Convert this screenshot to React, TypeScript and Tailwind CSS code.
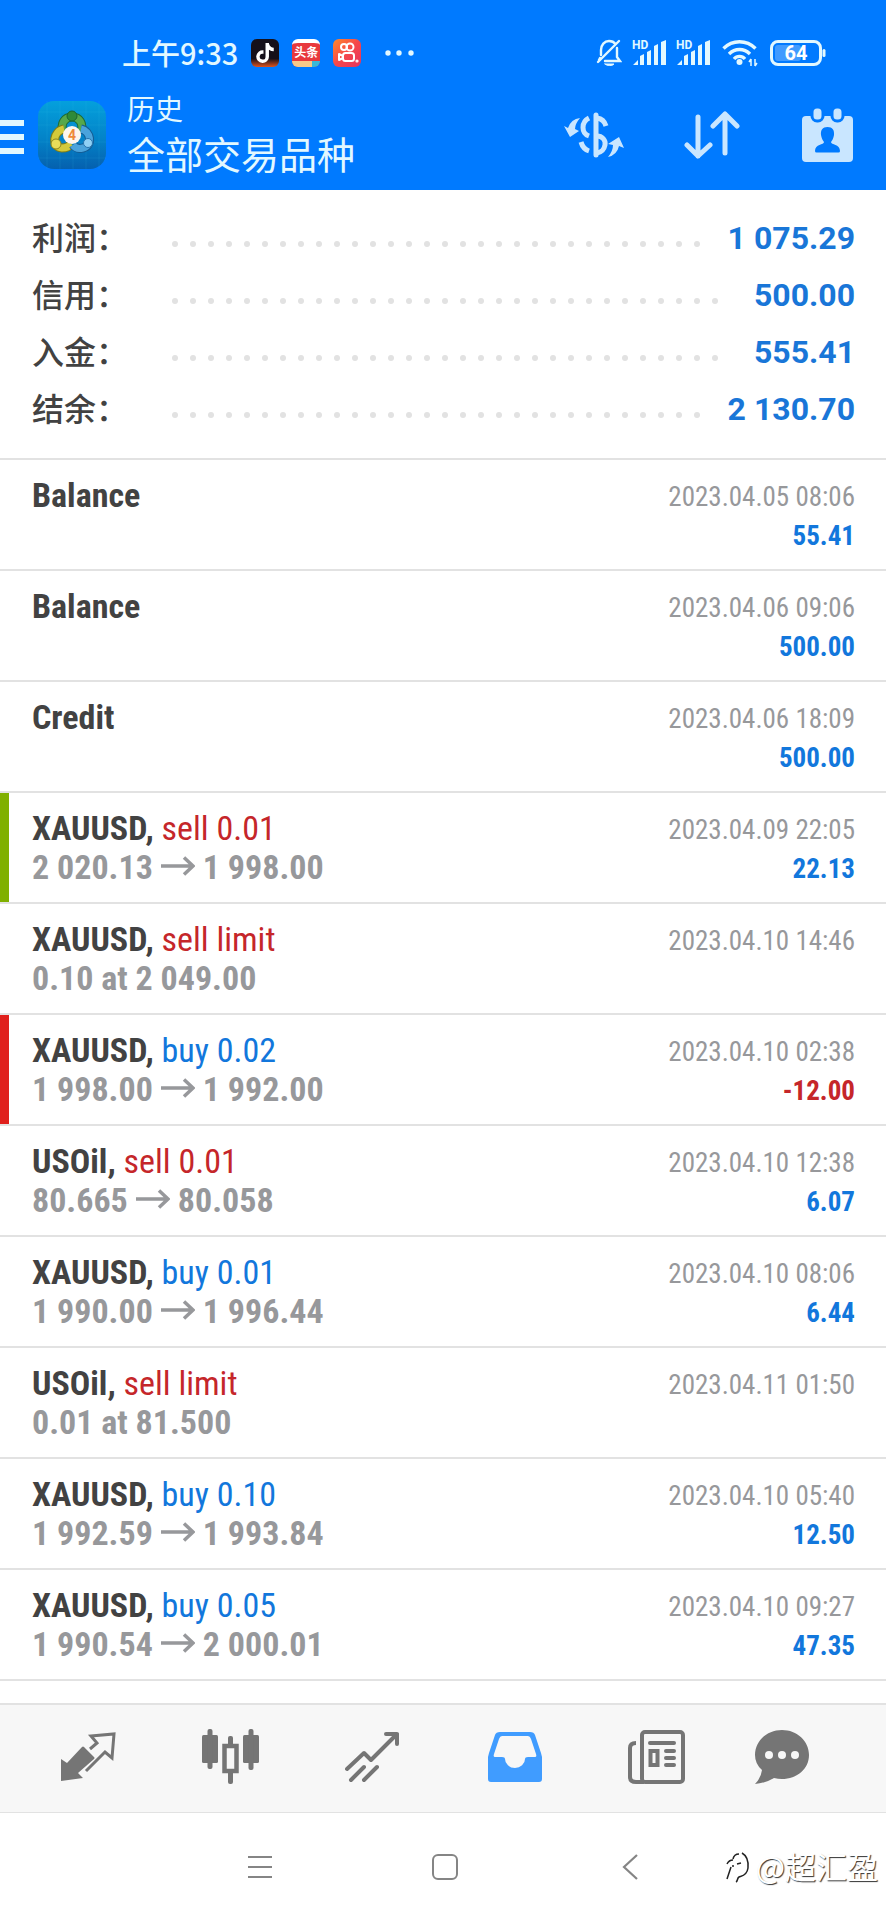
import type { ReactNode } from "react";
import { FaTiktok } from "react-icons/fa6";

type Deal = {
  symbol: string;
  action?: string;
  side?: "buy" | "sell";
  from?: string;
  to?: string;
  note?: string;
  time?: string;
  value?: string;
  mark?: "tp" | "sl";
};

const summary = [
  { label: "利润：", value: "1 075.29" },
  { label: "信用：", value: "500.00" },
  { label: "入金：", value: "555.41" },
  { label: "结余：", value: "2 130.70" },
];

const deals: Deal[] = [
  { symbol: "Balance", time: "2023.04.05 08:06", value: "55.41" },
  { symbol: "Balance", time: "2023.04.06 09:06", value: "500.00" },
  { symbol: "Credit", time: "2023.04.06 18:09", value: "500.00" },
  { symbol: "XAUUSD", action: "sell 0.01", side: "sell", from: "2 020.13", to: "1 998.00", time: "2023.04.09 22:05", value: "22.13", mark: "tp" },
  { symbol: "XAUUSD", action: "sell limit", side: "sell", note: "0.10 at 2 049.00", time: "2023.04.10 14:46" },
  { symbol: "XAUUSD", action: "buy 0.02", side: "buy", from: "1 998.00", to: "1 992.00", time: "2023.04.10 02:38", value: "-12.00", mark: "sl" },
  { symbol: "USOil", action: "sell 0.01", side: "sell", from: "80.665", to: "80.058", time: "2023.04.10 12:38", value: "6.07" },
  { symbol: "XAUUSD", action: "buy 0.01", side: "buy", from: "1 990.00", to: "1 996.44", time: "2023.04.10 08:06", value: "6.44" },
  { symbol: "USOil", action: "sell limit", side: "sell", note: "0.01 at 81.500", time: "2023.04.11 01:50" },
  { symbol: "XAUUSD", action: "buy 0.10", side: "buy", from: "1 992.59", to: "1 993.84", time: "2023.04.10 05:40", value: "12.50" },
  { symbol: "XAUUSD", action: "buy 0.05", side: "buy", from: "1 990.54", to: "2 000.01", time: "2023.04.10 09:27", value: "47.35" },
  { symbol: "XAUUSD", action: "buy 0.10", side: "buy" },
];

function Signal() {
  return (
    <svg width="34" height="28" viewBox="0 0 34 28" fill="currentColor">
      <text x="0" y="10" fontSize="12" fontWeight="700" fontFamily="Roboto, sans-serif">
        HD
      </text>
      <path d="M1 26l5-5v5zM8 17l4-2v11H8zM15 13l4-2v15h-4zM22 7l4-2v21h-4zM29 3l5-2v25h-5z" />
    </svg>
  );
}

function StatusBar() {
  return (
    <div className="flex h-20 items-center justify-between pt-[26px] pr-[60px] pl-[122px]">
      <div className="flex items-center gap-[13px]">
        <span className="pb-0.5 text-[29px] leading-8 font-medium">上午9:33</span>
        <span className="flex size-7 items-center justify-center overflow-hidden rounded-md bg-[linear-gradient(#15101a_70%,#e2531d)] text-white">
          <FaTiktok size={20} />
        </span>
        <span className="flex size-7 flex-col items-center overflow-hidden rounded-md border-t-4 border-white bg-[#e8383d] text-white">
          <span className="text-[12px] leading-[18px] font-bold">头条</span>
          <span className="h-1.5 w-full bg-[linear-gradient(90deg,#f7c98a_70%,#39b9d8_70%)]" />
        </span>
        <svg className="rounded-md" width="28" height="28" viewBox="0 0 28 28" fill="none" stroke="#fff" strokeWidth="2">
          <defs>
            <linearGradient id="ks" x1="0" y1="0" x2="1" y2="1">
              <stop offset="0" stopColor="#ff8a2b" />
              <stop offset="0.5" stopColor="#f5474b" />
              <stop offset="1" stopColor="#e6335f" />
            </linearGradient>
          </defs>
          <rect width="28" height="28" fill="url(#ks)" stroke="none" />
          <circle cx="11" cy="8" r="3" />
          <circle cx="17" cy="8" r="3.5" />
          <rect x="10" y="14" width="11" height="8" rx="2.5" />
          <path d="M10 17l-4-2v6l4-2" strokeLinejoin="round" />
          <circle cx="24" cy="22" r="0.6" />
        </svg>
        <svg className="ml-2.5" width="32" height="8" viewBox="0 0 32 8" fill="currentColor">
          <circle cx="4" cy="4" r="2.7" />
          <circle cx="15" cy="4" r="2.7" />
          <circle cx="27" cy="4" r="2.7" />
        </svg>
      </div>
      <div className="flex items-center">
        <svg className="mr-2.5" width="26" height="28" viewBox="0 0 26 28" fill="none" stroke="currentColor" strokeWidth="2.4" strokeLinecap="round">
          <path d="M5 16V11c0-5 3.500-9 8-9 3 0 5 1 6.500 3M21 9v9l3 4H9M4 19l-1 2" />
          <path d="M23 2L2 23" />
          <path d="M9 25h9c-1 2-7.500 2-9 0z" fill="currentColor" strokeWidth="1" />
        </svg>
        <Signal />
        <span className="w-2.5" />
        <Signal />
        <svg className="mx-3" width="36" height="28" viewBox="0 0 36 28" fill="none" stroke="currentColor" strokeWidth="3.400">
          <path d="M1.500 9.500c9-9 23-9 32 0M7 15c6-6 15-6 21 0M12 20c3-3.500 8-3.500 11 0" />
          <circle cx="17.500" cy="23" r="3" fill="currentColor" stroke="none" />
          <path d="M29 20v7M29 20l-2 3M33 20v7M33 27l2-3" strokeWidth="1.500" />
        </svg>
        <svg width="56" height="26" viewBox="0 0 56 26" fill="none">
          <rect x="5" y="5" width="26" height="16" rx="3" fill="#fff" fillOpacity="0.25" />
          <rect x="1.500" y="1.500" width="49" height="23" rx="6.500" stroke="currentColor" strokeWidth="3" />
          <rect x="52.500" y="9" width="3" height="8" rx="1.500" fill="currentColor" />
          <text x="26" y="20" textAnchor="middle" fill="#fff" fontSize="20" fontWeight="700" fontFamily="Roboto, sans-serif">
            64
          </text>
        </svg>
      </div>
    </div>
  );
}

function Logo() {
  return (
    <svg width="68" height="68" viewBox="0 0 68 68">
      <defs>
        <linearGradient id="tile" x1="0" y1="0" x2="0" y2="1">
          <stop offset="0" stopColor="#04a0dc" />
          <stop offset="0.550" stopColor="#0383c8" />
          <stop offset="1" stopColor="#0560ae" />
        </linearGradient>
      </defs>
      <rect width="68" height="68" rx="16" fill="url(#tile)" />
      <path d="M9 0v68M22 0v68M35 0v68M48 0v68M61 0v68M0 11h68M0 24h68M0 41h68M0 57h68" stroke="#4cc2ee" strokeOpacity="0.120" />
      <g strokeWidth="7" fill="none">
        <path d="M25 32c-3-10 2-16 9-16s12 6 9 16" stroke="#1d6b34" strokeWidth="9" />
        <path d="M25 32c-3-10 2-16 9-16s12 6 9 16" stroke="#56a84c" />
        <path d="M26 28c-11 2-13 18-2 19 4 0 7-1 9-4" stroke="#7d7d17" strokeWidth="9" />
        <path d="M26 28c-11 2-13 18-2 19 4 0 7-1 9-4" stroke="#d3c93a" />
        <path d="M43 28c10 2 12 17 2 19-4 1-8 0-10-3" stroke="#155b92" strokeWidth="9" />
        <path d="M43 28c10 2 12 17 2 19-4 1-8 0-10-3" stroke="#4aa3dc" />
      </g>
      <circle cx="34" cy="15" r="5" fill="#2f8a38" stroke="#1a6430" />
      <circle cx="18" cy="43" r="5" fill="#e8dc5a" stroke="#8a841c" />
      <circle cx="50" cy="42" r="4.500" fill="#8fd0f5" stroke="#2673ad" />
      <circle cx="34" cy="34" r="9" fill="#fdf6ee" />
      <text x="34" y="39" textAnchor="middle" fontSize="14" fontWeight="700" fill="#ee8a3a" fontFamily="Roboto, sans-serif">
        4
      </text>
    </svg>
  );
}

function Header() {
  return (
    <header className="bg-[#007aff] text-[#e2f8ff]">
      <StatusBar />
      <div className="flex h-[110px] items-center pr-8">
        <button aria-label="菜单" className="flex w-6 flex-col gap-2 pt-1">
          <span className="h-1.5 bg-current" />
          <span className="h-1.5 bg-current" />
          <span className="h-1.5 bg-current" />
        </button>
        <span className="ml-3.5">
          <Logo />
        </span>
        <div className="ml-[21px] flex-1 pb-1">
          <p className="text-[28px] leading-10">历史</p>
          <h1 className="text-[38px] leading-[50px]">全部交易品种</h1>
        </div>
        <div className="flex items-center gap-[60px] text-[#c9e6ff]">
          <button aria-label="币种">
            <svg width="60" height="52" viewBox="0 0 60 52" fill="none" stroke="currentColor" strokeWidth="5">
              <path d="M32 6v40" strokeLinecap="round" />
              <path d="M33 9q7 1 9 8M33 27c5 0 9 4 8 9s-3 7-8 8M25 9c-8 4-8 15 0 18M17 33q2 7 8 9" />
              <path d="M0 17l4 2Q7 10 16 9q-5 6-5 11l4 2-9 6zM60 39l-5-2q-2 9-11 11 5-6 5-12l-5-1 11-7z" fill="currentColor" stroke="none" />
            </svg>
          </button>
          <button aria-label="排序">
            <svg width="57" height="50" viewBox="0 0 57 50" fill="none" stroke="currentColor" strokeWidth="5" strokeLinecap="round" strokeLinejoin="round">
              <path d="M14 7v39M3 35l11 11 12-11M41 43V4M29 16L41 4l12 12" />
            </svg>
          </button>
          <button aria-label="日期">
            <svg width="53" height="54" viewBox="0 0 53 54" fill="currentColor">
              <rect x="1" y="8" width="51" height="46" rx="4" />
              <g className="stroke-[#007aff]" strokeWidth="3">
                <rect x="11" y="-1" width="11" height="14" rx="5" />
                <rect x="31" y="-1" width="11" height="14" rx="5" />
              </g>
              <path
                className="fill-[#007aff]"
                d="M26.500 19c5 0 7 3 6.500 8-.5 3-1.500 5-3 7 0 3 9 2 9 9q0 1.500-1.500 1.500h-22Q14 44.500 14 43c0-7 9-6 9-9-1.500-2-2.500-4-3-7-.5-5 1.500-8 6.500-8z"
              />
            </svg>
          </button>
        </div>
      </div>
    </header>
  );
}

function Summary() {
  return (
    <dl className="border-b-2 border-[#e2e2e2] pt-[19px] pr-[31px] pb-[21px] pl-8">
      {summary.map((row) => (
        <div key={row.label} className="flex h-[57px] items-center">
          <dt className="w-24 pb-1 text-[32px] font-medium whitespace-nowrap text-[#424242]">{row.label}</dt>
          {/* dots that don't fit wrap onto a clipped second line */}
          <div aria-hidden="true" className="mt-3 mr-5 ml-[38px] flex h-1.5 min-w-0 flex-1 flex-wrap overflow-hidden">
            {Array.from({ length: 40 }, (_, i) => (
              <span key={i} className="flex w-[18px] justify-center">
                <span className="size-1.5 rounded-full bg-[#e2e2e2]" />
              </span>
            ))}
          </div>
          <dd className="font-['Roboto',sans-serif] text-[32px] font-bold text-[#1976d8]">{row.value}</dd>
        </div>
      ))}
    </dl>
  );
}

function DealRow({ deal }: { deal: Deal }) {
  const negative = deal.value?.startsWith("-");
  return (
    <li className="relative flex h-[111px] justify-between border-b-2 border-[#e2e2e2] pt-4 pr-[31px] pl-8 font-['Roboto_Condensed','Roboto',sans-serif] leading-[39px]">
      {deal.mark && (
        <span className={`absolute inset-y-0 left-0 w-[9px] ${deal.mark === "tp" ? "bg-[#80b000]" : "bg-[#e0201c]"}`} />
      )}
      <div className="text-[34px]">
        <p>
          <span className="font-bold text-[#424242]">
            {deal.symbol}
            {deal.action && ","}
          </span>
          {deal.action && (
            <span className={deal.side === "buy" ? "text-[#1277dc]" : "text-[#c5262a]"}> {deal.action}</span>
          )}
        </p>
        <p className="flex items-center font-bold text-[#97989b]">
          {deal.note}
          {deal.from && (
            <>
              {deal.from}
              <svg className="mx-2 mb-1" width="34" height="20" viewBox="0 0 34 20" fill="none" stroke="currentColor" strokeWidth="3.500">
                <path d="M0 10h32M23 1.500l9 8.500-9 8.500" />
              </svg>
              {deal.to}
            </>
          )}
        </p>
      </div>
      <div className="pt-0.5 text-right text-[27px]">
        <p className="text-[#97989b]">{deal.time}</p>
        <p className={`font-bold ${negative ? "text-[#c5262a]" : "text-[#1277dc]"}`}>{deal.value}</p>
      </div>
    </li>
  );
}

function Tab({ label, active, children }: { label: string; active?: boolean; children: ReactNode }) {
  return (
    <button aria-label={label} className={`flex items-center justify-center ${active ? "text-[#409cff]" : "text-[#757575]"}`}>
      {children}
    </button>
  );
}

function TabBar() {
  return (
    <nav className="grid h-[110px] shrink-0 grid-cols-[repeat(5,142fr)_108fr] border-t-2 border-b border-[#e2e2e2] bg-[#f7f7f7] pr-[50px] pb-1 pl-[18px]">
      <Tab label="行情">
        <svg width="56" height="52" viewBox="0 0 56 52" fill="none" stroke="currentColor" strokeWidth="3">
          <path d="M0 28v22l22-3-5-5 16-14q1-1 0-2L23 16q-1-1-2 0L6 32z" fill="currentColor" stroke="none" />
          <path d="M29 18l7-6-6-7 23-2-2 24-7-6-19 19" />
        </svg>
      </Tab>
      <Tab label="图表">
        <svg width="58" height="56" viewBox="0 0 58 56" fill="currentColor">
          <rect x="0" y="6" width="16" height="28" rx="1.500" />
          <rect x="5.500" y="0" width="5" height="40" rx="2" />
          <rect x="41" y="6" width="16" height="28" rx="1.500" />
          <rect x="46.500" y="0" width="5" height="41" rx="2" />
          <rect x="26" y="7" width="5" height="10" rx="2" />
          <rect x="26" y="42" width="5" height="13" rx="2" />
          <rect x="22.500" y="17" width="12" height="25" fill="none" stroke="currentColor" strokeWidth="4.500" />
        </svg>
      </Tab>
      <Tab label="交易">
        <svg width="56" height="52" viewBox="0 0 56 52" fill="none" stroke="currentColor" strokeWidth="4" strokeLinecap="round" strokeLinejoin="round">
          <path d="M2 38l17-16 7 7L52 3M41 3h11v10M6 49l13-13M19 49l13-13" />
        </svg>
      </Tab>
      <Tab label="历史" active>
        <svg width="54" height="50" viewBox="0 0 54 50" fill="currentColor" fillRule="evenodd">
          <path d="M12 0h30q4 0 5 3l6 18 1 4v22q0 3-3 3H3q-3 0-3-3V25l1-4L7 3q1-3 5-3zM14 4q-2 0-3 3L6 22q-1 3 1 3h7q3 0 3 2a10 9 0 0 0 20 0q0-2 3-2h7q2 0 1-3L43 7q-1-3-3-3z" />
        </svg>
      </Tab>
      <Tab label="新闻">
        <svg width="58" height="56" viewBox="0 0 58 56" fill="none" stroke="currentColor" strokeWidth="4">
          <rect x="14" y="3" width="41" height="50" rx="3" />
          <path d="M8 14q-6 0-6 5v29q0 5 6 5h8" />
          <path d="M22 14h24" strokeLinecap="round" />
          <rect x="22.500" y="22" width="7" height="14" />
          <path d="M38 22h8M38 29h8M38 36h8" strokeLinecap="round" />
        </svg>
      </Tab>
      <Tab label="信箱">
        <svg width="54" height="56" viewBox="0 0 54 56" fill="currentColor">
          <path d="M27 1c15 0 27 11 27 25S42 50 27 50q-4 0-8-1-8 5-19 6 6-6 7-14-7-6-7-15C0 12 12 1 27 1z" />
          <g fill="#f7f7f7">
            <circle cx="14" cy="26" r="4" />
            <circle cx="27" cy="26" r="4" />
            <circle cx="40" cy="26" r="4" />
          </g>
        </svg>
      </Tab>
    </nav>
  );
}

function SystemBar() {
  return (
    <div className="relative grid h-[107px] shrink-0 grid-cols-3 place-items-center bg-white pr-[164px] pl-[168px] text-[#858585]">
      <button aria-label="最近任务">
        <svg width="26" height="26" viewBox="0 0 26 26" stroke="currentColor" strokeWidth="2.200">
          <path d="M1 3h24M1 13h24M1 23h24" />
        </svg>
      </button>
      <button aria-label="主屏幕">
        <svg width="26" height="26" viewBox="0 0 26 26" fill="none" stroke="currentColor" strokeWidth="2">
          <rect x="1" y="1" width="24" height="24" rx="5" />
        </svg>
      </button>
      <button aria-label="返回">
        <svg width="16" height="26" viewBox="0 0 16 26" fill="none" stroke="currentColor" strokeWidth="2.200">
          <path d="M15 1L2 13l13 12" />
        </svg>
      </button>
      <div className="absolute right-2 bottom-8 flex items-center gap-1 text-[31px] leading-[44px] text-white [text-shadow:1px_1px_1px_#333]">
        <svg width="28" height="36" viewBox="0 0 28 36" fill="none" stroke="#222" strokeWidth="1.500">
          <path d="M3 16q2-4 6-4M7 19q-2 6-4 12M8 18h2M13 16l4-1M18 5q7 4 6 15c-1 8-7 8-9 9s-1 4-3 5M9 11q1-5 6-5" />
        </svg>
        @超汇盈
      </div>
    </div>
  );
}

export default function App() {
  return (
    <div className="flex h-screen flex-col overflow-hidden bg-white font-['Noto_Sans_CJK_SC',sans-serif]">
      <Header />
      <main className="min-h-0 flex-1 overflow-hidden">
        <Summary />
        <ul>
          {deals.map((deal, i) => (
            <DealRow key={i} deal={deal} />
          ))}
        </ul>
      </main>
      <TabBar />
      <SystemBar />
    </div>
  );
}
